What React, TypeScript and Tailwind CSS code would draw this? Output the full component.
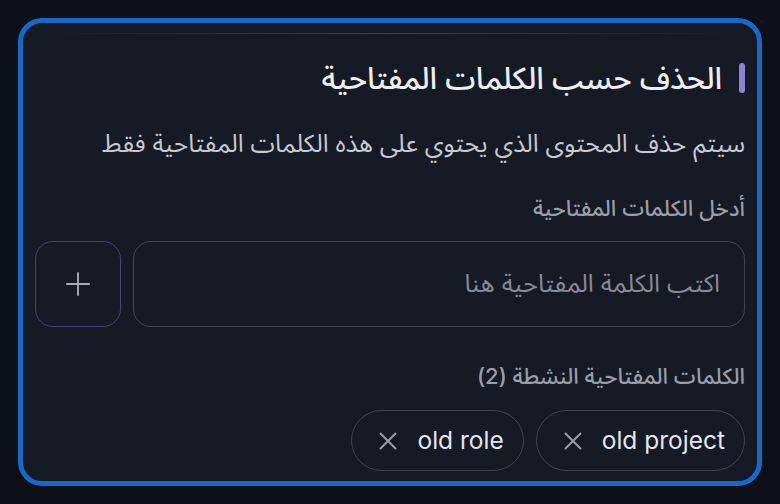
import { Plus, X } from "lucide-react";

const KEYWORDS = ["old project", "old role"];

function Chip({ label }: { label: string }) {
  return (
    <div className="flex h-[61px] items-center gap-[14px] rounded-full border border-[#41444f] pl-[21px] pr-[19px]">
      <span dir="ltr" className="text-[24.5px] leading-none text-[#e4e6ec]">
        {label}
      </span>
      <X className="h-[30px] w-[30px] text-[#9a9ea8]" strokeWidth={1.5} />
    </div>
  );
}

export default function App() {
  return (
    <div
      dir="rtl"
      className="min-h-screen bg-[#0d1017] p-[18px]"
      style={{ fontFamily: 'Inter, "Noto Sans Arabic", "DejaVu Sans", sans-serif' }}
    >
      <div className="h-[468px] w-[744px] rounded-[24px] border-[5px] border-[#1769c9] bg-[#161a25] px-[12px]">
        <div className="mx-[10px] mt-[10px] h-px bg-gradient-to-r from-transparent via-[#3e414c] to-transparent" />

        {/* title */}
        <div className="mt-[24px] flex items-center gap-[17px]">
          <span className="h-[30px] w-[6px] rounded-full bg-[#8b82d6]" />
          <h2 className="text-[30.5px] leading-[40px] font-medium text-[#eceef3]">
            الحذف حسب الكلمات المفتاحية
          </h2>
        </div>

        <p className="mt-[28px] text-[24.7px] leading-[34px] text-[#c6c9d2]">
          سيتم حذف المحتوى الذي يحتوي على هذه الكلمات المفتاحية فقط
        </p>

        <label className="mt-[33px] block text-[22px] leading-[30px] font-medium text-[#9a9ea8]">
          أدخل الكلمات المفتاحية
        </label>

        <div className="mt-[18px] flex gap-[12px]">
          <div className="flex h-[86px] flex-1 items-center rounded-[18px] border-[1.5px] border-[#43464f] px-[24px]">
            <span className="text-[25px] text-[#868a96]">اكتب الكلمة المفتاحية هنا</span>
          </div>
          <button className="flex h-[86px] w-[86px] items-center justify-center rounded-[18px] border-[1.5px] border-[#45427a]">
            <Plus className="h-[38px] w-[38px] text-[#a6a9b8]" strokeWidth={1.2} />
          </button>
        </div>

        <p className="mt-[34px] text-[22px] leading-[30px] font-medium text-[#9a9ea8]">
          الكلمات المفتاحية النشطة (2)
        </p>

        <div className="mt-[19px] flex gap-[12px]">
          {KEYWORDS.map((k) => (
            <Chip key={k} label={k} />
          ))}
        </div>
      </div>
    </div>
  );
}
